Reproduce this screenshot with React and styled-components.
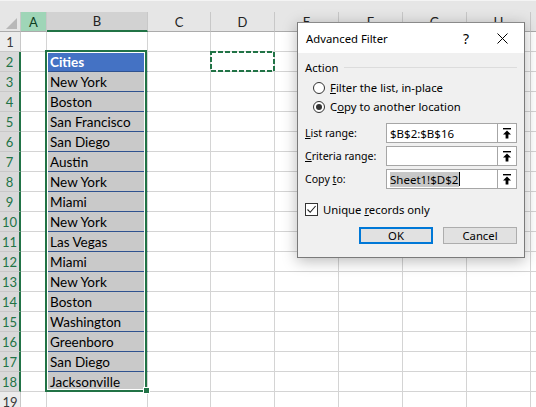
import React from 'react';
import styled, { createGlobalStyle } from 'styled-components';

const GlobalStyle = createGlobalStyle`
  html, body {
    margin: 0;
    padding: 0;
    background: #ffffff;
    overflow: hidden;
  }
`;

const COLS = ['A', 'B', 'C', 'D', 'E', 'F', 'G', 'H', 'I'];
const CITIES = [
  'New York', 'Boston', 'San Francisco', 'San Diego', 'Austin', 'New York',
  'Miami', 'New York', 'Las Vegas', 'Miami', 'New York', 'Boston',
  'Washington', 'Greenboro', 'San Diego', 'Jacksonville',
];
const ROW_COUNT = 19;

const Sheet = styled.div`
  position: relative;
  width: 536px;
  height: 407px;
  overflow: hidden;
  font-family: Lato, "Liberation Sans", sans-serif;
`;

const Grid = styled.div`
  display: grid;
  grid-template-columns: 21px 26px 101px 63px repeat(5, 64px) 40px;
  grid-template-rows: 12px;
  grid-auto-rows: 20px;
`;

const TopBand = styled.div`
  grid-column: 1 / -1;
  background: #e6e6e6;
  border-top: 1px solid #f4f4f4;
  box-sizing: border-box;
`;

const Corner = styled.div`
  position: relative;
  background: #e6e6e6;
  border-right: 1px solid #c8c8c8;
  border-bottom: 1px solid #ababab;
  box-sizing: border-box;

  &::after {
    content: '';
    position: absolute;
    right: 3px;
    bottom: 2px;
    width: 0;
    height: 0;
    border-left: 11px solid transparent;
    border-bottom: 11px solid #b8b8b8;
  }
`;

const ColHead = styled.div`
  display: flex;
  align-items: center;
  justify-content: center;
  box-sizing: border-box;
  font-size: 13px;
  color: ${(p) => (p.$state === 'active' ? '#0e3d22' : '#222')};
  background: ${(p) =>
    p.$state === 'active' ? '#9fd5b7' : p.$state === 'selected' ? '#d2d2d2' : '#e6e6e6'};
  border-right: 1px solid #c8c8c8;
  border-bottom: ${(p) => (p.$state === 'selected' ? '2px solid #217346' : '1px solid #ababab')};
`;

const RowHead = styled.div`
  display: flex;
  align-items: center;
  justify-content: center;
  box-sizing: border-box;
  font-size: 13px;
  color: ${(p) => (p.$selected ? '#217346' : '#3a3a3a')};
  background: ${(p) => (p.$selected ? '#d9d9d9' : '#ececec')};
  border-bottom: 1px solid #c8c8c8;
  border-right: ${(p) => (p.$selected ? '2px solid #217346' : '1px solid #c8c8c8')};
`;

const Cell = styled.div`
  box-sizing: border-box;
  display: flex;
  align-items: center;
  padding-left: 3px;
  font-size: 13.5px;
  white-space: nowrap;
  overflow: hidden;
  border-right: 1px solid #d4d4d4;
  border-bottom: 1px solid ${(p) => (p.$kind ? '#2f528f' : '#d4d4d4')};
  background: ${(p) =>
    p.$kind === 'header' ? '#4472c4' : p.$kind === 'data' ? '#c9c9c9' : '#ffffff'};
  color: ${(p) => (p.$kind === 'header' ? '#ffffff' : '#000000')};
  font-weight: ${(p) => (p.$kind === 'header' ? 700 : 400)};
`;

const Selection = styled.div`
  position: absolute;
  left: 45px;
  top: 50px;
  width: 102px;
  height: 342px;
  border: 2px solid #217346;
  box-sizing: border-box;
  box-shadow: inset 0 0 0 1px #ffffff;
  pointer-events: none;
`;

const FillHandle = styled.div`
  position: absolute;
  left: 143px;
  top: 387px;
  width: 7px;
  height: 7px;
  background: #217346;
  border: 1px solid #ffffff;
  box-sizing: border-box;
`;

const Marquee = styled.svg`
  position: absolute;
  left: 210px;
  top: 51px;
`;

/* ---------- dialog ---------- */

const Dialog = styled.div`
  position: absolute;
  left: 297px;
  top: 22px;
  width: 228px;
  height: 236px;
  box-sizing: border-box;
  background: #f0f0f0;
  border: 1px solid #7a7a7a;
  border-top-color: #8a8a8a;
  box-shadow: 0 3px 14px rgba(0, 0, 0, 0.28);
  font-family: "Noto Sans", "Open Sans", sans-serif;
  font-size: 10.6px;
  color: #000;
  display: flex;
  flex-direction: column;
`;

const TitleBar = styled.div`
  height: 30px;
  background: #ffffff;
  display: flex;
  align-items: center;
  padding-left: 8px;
  font-size: 11.3px;
`;

const Title = styled.span`
  flex: 1;
`;

const TitleButton = styled.span`
  width: 36px;
  display: flex;
  justify-content: center;
  align-items: center;
  font-size: 14px;
  margin-right: ${(p) => (p.$last ? '4px' : '0')};
`;

const Body = styled.div`
  flex: 1;
  padding: 7px 7px 0 7px;
  display: flex;
  flex-direction: column;
`;

const GroupHead = styled.div`
  height: 14px;
  display: flex;
  align-items: center;
  gap: 6px;
  font-size: 11.3px;
  &::after {
    content: '';
    flex: 1;
    height: 1px;
    background: #dcdcdc;
  }
`;

const Options = styled.div`
  margin: 4px 0 0 8px;
  display: flex;
  flex-direction: column;
`;

const Option = styled.label`
  height: 19px;
  display: flex;
  align-items: center;
  gap: 5px;
  font-size: 11.3px;
`;

const Radio = styled.span`
  width: 12px;
  height: 12px;
  border-radius: 50%;
  border: 1px solid #333;
  background: #fff;
  box-sizing: border-box;
  display: flex;
  align-items: center;
  justify-content: center;
  &::after {
    content: '';
    width: 6px;
    height: 6px;
    border-radius: 50%;
    background: ${(p) => (p.$checked ? '#333' : 'transparent')};
  }
`;

const Fields = styled.div`
  margin-top: 7px;
  display: flex;
  flex-direction: column;
  gap: 3px;
`;

const FieldRow = styled.div`
  display: flex;
  align-items: center;
  height: 20px;
`;

const FieldLabel = styled.span`
  width: 81px;
  flex-shrink: 0;
`;

const RefBox = styled.div`
  flex: 1;
  display: flex;
  height: 20px;
  border: 1px solid #a6a6a6;
  box-sizing: border-box;
  background: #fff;
`;

const RefText = styled.div`
  flex: 1;
  display: flex;
  align-items: center;
  padding-left: 3px;
  font-size: 11.5px;
`;

const Highlight = styled.span`
  background: #c8c8c8;
  padding-right: 1px;
`;

const Caret = styled.span`
  display: inline-block;
  width: 1px;
  height: 14px;
  background: #000;
`;

const CollapseButton = styled.div`
  width: 19px;
  border-left: 1px solid #a6a6a6;
  box-sizing: border-box;
  display: flex;
  align-items: center;
  justify-content: center;
  background: #fff;
`;

const CheckRow = styled.label`
  margin-top: 12px;
  height: 16px;
  display: flex;
  align-items: center;
  gap: 5px;
  font-size: 11.3px;
`;

const Check = styled.span`
  width: 13px;
  height: 13px;
  border: 1px solid #333;
  background: #fff;
  box-sizing: border-box;
  display: flex;
  align-items: center;
  justify-content: center;
`;

const Buttons = styled.div`
  margin-top: 10px;
  display: flex;
  justify-content: flex-end;
  gap: 10px;
`;

const Button = styled.div`
  width: 74px;
  height: 17px;
  box-sizing: border-box;
  display: flex;
  align-items: center;
  justify-content: center;
  background: #e1e1e1;
  font-size: 11.3px;
  border: ${(p) => (p.$primary ? '2px solid #0078d7' : '1px solid #adadad')};
`;

const UpArrow = () => (
  <svg width="10" height="11" viewBox="0 0 10 11">
    <rect x="1" y="0" width="8" height="1.4" fill="#000" />
    <path d="M5 2.4 L9 6.6 L6.4 6.6 L6.4 10.5 L3.6 10.5 L3.6 6.6 L1 6.6 Z" fill="#000" />
  </svg>
);

const CloseIcon = () => (
  <svg width="11" height="11" viewBox="0 0 11 11">
    <path d="M0.5 0.5 L10.5 10.5 M10.5 0.5 L0.5 10.5" stroke="#000" strokeWidth="1" />
  </svg>
);

const CheckMark = () => (
  <svg width="11" height="11" viewBox="0 0 11 11">
    <path d="M1.5 5.5 L4.2 8.3 L9.6 2" stroke="#222" strokeWidth="1.1" fill="none" />
  </svg>
);

const RefField = ({ label, children }) => (
  <FieldRow>
    <FieldLabel>{label}</FieldLabel>
    <RefBox>
      <RefText>{children}</RefText>
      <CollapseButton>
        <UpArrow />
      </CollapseButton>
    </RefBox>
  </FieldRow>
);

const cellKind = (col, row) => {
  if (col !== 'B') return null;
  if (row === 2) return 'header';
  if (row >= 3 && row <= 18) return 'data';
  return null;
};

const cellText = (col, row) => {
  if (col !== 'B') return '';
  if (row === 2) return 'Cities';
  return CITIES[row - 3] || '';
};

const App = () => {
  const rows = Array.from({ length: ROW_COUNT }, (_, i) => i + 1);
  return (
    <Sheet>
      <GlobalStyle />
      <Grid>
        <TopBand />
        <Corner />
        {COLS.map((c) => (
          <ColHead key={c} $state={c === 'A' ? 'active' : c === 'B' ? 'selected' : null}>
            {c}
          </ColHead>
        ))}
        {rows.map((r) => (
          <React.Fragment key={r}>
            <RowHead $selected={r >= 2 && r <= 18}>{r}</RowHead>
            {COLS.map((c) => (
              <Cell key={c} $kind={cellKind(c, r)}>
                {cellText(c, r)}
              </Cell>
            ))}
          </React.Fragment>
        ))}
      </Grid>

      <Selection />
      <FillHandle />
      <Marquee width="65" height="21" viewBox="0 0 65 21">
        <rect x="1" y="1" width="63" height="19" fill="none" stroke="#217346" strokeWidth="2" strokeDasharray="5 2" />
      </Marquee>

      <Dialog>
        <TitleBar>
          <Title>Advanced Filter</Title>
          <TitleButton>?</TitleButton>
          <TitleButton $last>
            <CloseIcon />
          </TitleButton>
        </TitleBar>
        <Body>
          <GroupHead>Action</GroupHead>
          <Options>
            <Option>
              <Radio />
              <span><u>F</u>ilter the list, in-place</span>
            </Option>
            <Option>
              <Radio $checked />
              <span>C<u>o</u>py to another location</span>
            </Option>
          </Options>
          <Fields>
            <RefField label={<><u>L</u>ist range:</>}>$B$2:$B$16</RefField>
            <RefField label={<><u>C</u>riteria range:</>} />
            <RefField label={<>Copy <u>t</u>o:</>}>
              <Highlight>Sheet1!$D$2</Highlight>
              <Caret />
            </RefField>
          </Fields>
          <CheckRow>
            <Check>
              <CheckMark />
            </Check>
            <span>Unique <u>r</u>ecords only</span>
          </CheckRow>
          <Buttons>
            <Button $primary>OK</Button>
            <Button>Cancel</Button>
          </Buttons>
        </Body>
      </Dialog>
    </Sheet>
  );
};

export default App;
